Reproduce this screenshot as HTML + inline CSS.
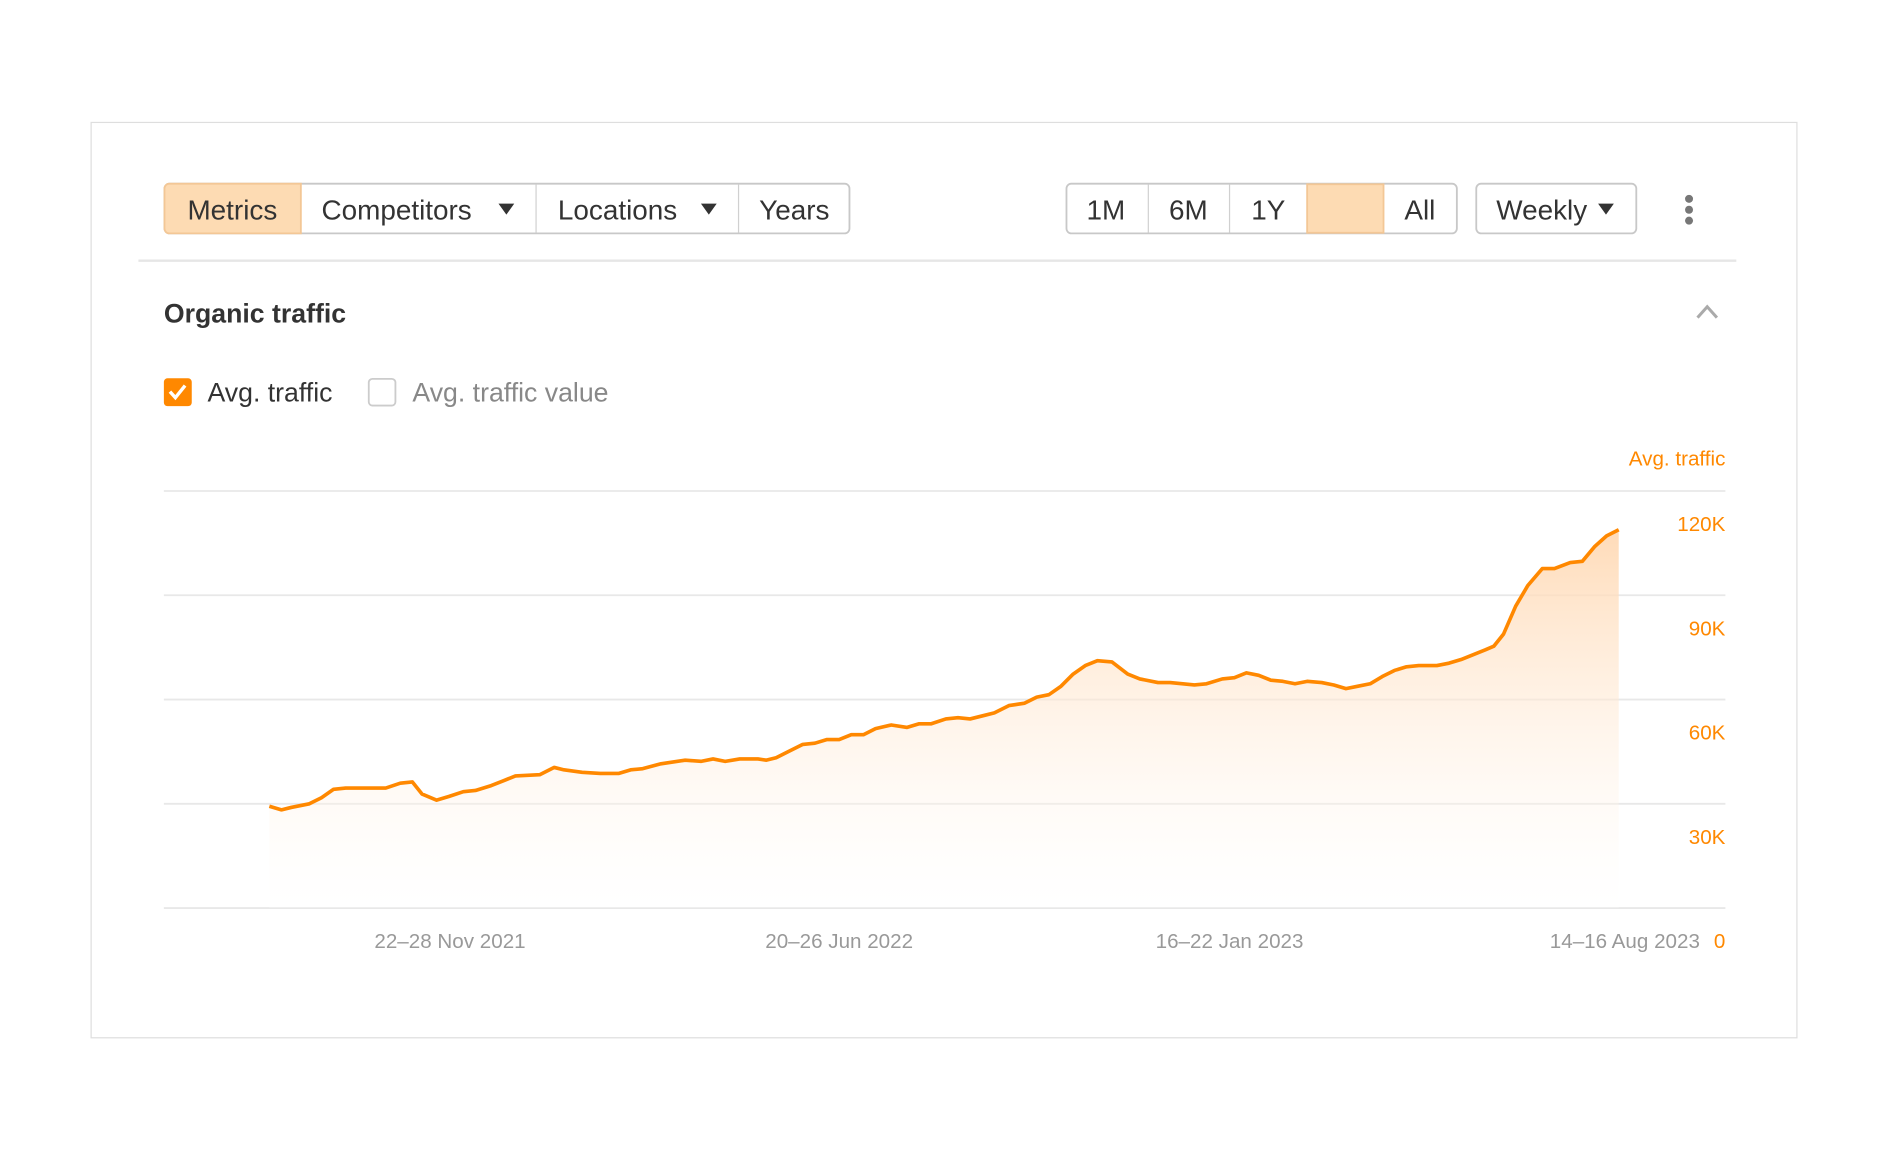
<!DOCTYPE html>
<html><head><meta charset="utf-8"><style>html,body{margin:0;padding:0;background:#fff;}svg{display:block}</style></head>
<body>
<svg width="1882" height="1176" viewBox="0 0 1552 970" xmlns="http://www.w3.org/2000/svg" font-family="Liberation Sans, Arial, sans-serif">
<defs>
<linearGradient id="g" x1="0" y1="0" x2="0" y2="1">
<stop offset="0" stop-color="#ffd7b0" stop-opacity="0.9"/>
<stop offset="1" stop-color="#fff" stop-opacity="0.2"/>
</linearGradient>
</defs>
<rect x="75" y="101" width="1407" height="755" fill="#fff" stroke="#dedede" stroke-width="1"/>
<!-- left group -->
<rect x="135.5" y="151.5" width="565" height="41" rx="4" fill="#fff" stroke="#c8c8c8" stroke-width="1.5"/>
<path d="M139.5 151.5 H248 V192.5 H139.5 a4 4 0 0 1 -4 -4 V155.5 a4 4 0 0 1 4 -4z" fill="#fddbb3" stroke="#f3c796" stroke-width="1.5"/>
<line x1="442" y1="152" x2="442" y2="192" stroke="#d0d0d0"/>
<line x1="609" y1="152" x2="609" y2="192" stroke="#d0d0d0"/>
<g font-size="23" fill="#333">
<text x="191.5" y="181" text-anchor="middle">Metrics</text>
<text x="265" y="181">Competitors</text>
<text x="460" y="181">Locations</text>
<text x="655" y="181" text-anchor="middle">Years</text>
<text x="912" y="181" text-anchor="middle">1M</text>
<text x="980" y="181" text-anchor="middle">6M</text>
<text x="1046" y="181" text-anchor="middle">1Y</text>
<text x="1109" y="181" text-anchor="middle">2Y</text>
<text x="1171" y="181" text-anchor="middle">All</text>
<text x="1234" y="181">Weekly</text>
</g>
<path d="M411 168 h13 l-6.5 9z M578 168 h13 l-6.5 9z M1318 168 h13 l-6.5 9z" fill="#333"/>
<!-- right group -->
<rect x="879.5" y="151.5" width="322" height="41" rx="4" fill="none" stroke="#c8c8c8" stroke-width="1.5"/>
<rect x="1078" y="152" width="63" height="40" fill="#fddbb3" stroke="#f3c796" stroke-width="1.5"/>
<line x1="947" y1="152" x2="947" y2="192" stroke="#d0d0d0"/>
<line x1="1014" y1="152" x2="1014" y2="192" stroke="#d0d0d0"/>
<rect x="1217.5" y="151.5" width="132" height="41" rx="4" fill="none" stroke="#c8c8c8" stroke-width="1.5"/>
<g fill="#777"><circle cx="1393" cy="164" r="3.3"/><circle cx="1393" cy="173" r="3.3"/><circle cx="1393" cy="182" r="3.3"/></g>
<line x1="114" y1="215" x2="1432" y2="215" stroke="#e6e6e6" stroke-width="2"/>
<text x="135" y="266" font-size="22" font-weight="bold" fill="#333">Organic traffic</text>
<path d="M1400 262 L1408 253 L1416 262" fill="none" stroke="#aaa" stroke-width="2.5"/>
<!-- checkboxes -->
<rect x="135" y="312" width="23" height="23" rx="3" fill="#ff8800"/>
<path d="M140 323 l4.5 5 l8 -10" fill="none" stroke="#fff" stroke-width="2.8"/>
<text x="171" y="331" font-size="22" fill="#333">Avg. traffic</text>
<rect x="304" y="312.5" width="22" height="22" rx="3" fill="#fff" stroke="#ccc" stroke-width="1.5"/>
<text x="340" y="331" font-size="22" fill="#888">Avg. traffic value</text>
<!-- chart -->
<text x="1423" y="384" font-size="17" fill="#ff8800" text-anchor="end">Avg. traffic</text>
<g stroke="#e8e8e8" stroke-width="1.5">
<line x1="135" y1="405" x2="1423" y2="405"/>
<line x1="135" y1="491" x2="1423" y2="491"/>
<line x1="135" y1="577" x2="1423" y2="577"/>
<line x1="135" y1="663" x2="1423" y2="663"/>
<line x1="135" y1="749" x2="1423" y2="749"/>
</g>
<g font-size="17" fill="#ff8800" text-anchor="end">
<text x="1423" y="438">120K</text>
<text x="1423" y="524">90K</text>
<text x="1423" y="610">60K</text>
<text x="1423" y="696">30K</text>
<text x="1423" y="782">0</text>
</g>
<g font-size="17" fill="#999" text-anchor="middle">
<text x="371" y="782">22–28 Nov 2021</text>
<text x="692" y="782">20–26 Jun 2022</text>
<text x="1014" y="782">16–22 Jan 2023</text>
<text x="1402" y="782" text-anchor="end">14–16 Aug 2023</text>
</g>
<path id="ln" d="M222,749 L222,665 L232,668 L240,666 L255,663 L265,658 L275,651 L285,650 L318,650 L330,646 L340,645 L348,655 L360,660 L370,657 L382,653 L392,652 L405,648 L415,644 L425,640 L445,639 L457,633 L465,635 L480,637 L495,638 L510,638 L520,635 L530,634 L545,630 L565,627 L578,628 L588,626 L598,628 L610,626 L625,626 L632,627 L640,625 L650,620 L662,614 L672,613 L682,610 L692,610 L702,606 L712,606 L722,601 L735,598 L748,600 L758,597 L768,597 L780,593 L790,592 L800,593 L812,590 L820,588 L832,582 L845,580 L855,575 L865,573 L875,566 L885,556 L895,549 L905,545 L917,546 L930,556 L940,560 L955,563 L965,563 L985,565 L995,564 L1008,560 L1018,559 L1028,555 L1038,557 L1048,561 L1058,562 L1068,564 L1078,562 L1090,563 L1100,565 L1110,568 L1120,566 L1130,564 L1140,558 L1150,553 L1160,550 L1170,549 L1185,549 L1195,547 L1205,544 L1215,540 L1225,536 L1232,533 L1240,523 L1250,500 L1260,483 L1272,469 L1282,469 L1295,464 L1305,463 L1315,451 L1325,442 L1335,437 L1335,749 Z" fill="url(#g)"/>
<polyline fill="none" stroke="#ff8800" stroke-width="3" stroke-linejoin="round" points="222,665 232,668 240,666 255,663 265,658 275,651 285,650 318,650 330,646 340,645 348,655 360,660 370,657 382,653 392,652 405,648 415,644 425,640 445,639 457,633 465,635 480,637 495,638 510,638 520,635 530,634 545,630 565,627 578,628 588,626 598,628 610,626 625,626 632,627 640,625 650,620 662,614 672,613 682,610 692,610 702,606 712,606 722,601 735,598 748,600 758,597 768,597 780,593 790,592 800,593 812,590 820,588 832,582 845,580 855,575 865,573 875,566 885,556 895,549 905,545 917,546 930,556 940,560 955,563 965,563 985,565 995,564 1008,560 1018,559 1028,555 1038,557 1048,561 1058,562 1068,564 1078,562 1090,563 1100,565 1110,568 1120,566 1130,564 1140,558 1150,553 1160,550 1170,549 1185,549 1195,547 1205,544 1215,540 1225,536 1232,533 1240,523 1250,500 1260,483 1272,469 1282,469 1295,464 1305,463 1315,451 1325,442 1335,437"/>
</svg>
</body></html>
